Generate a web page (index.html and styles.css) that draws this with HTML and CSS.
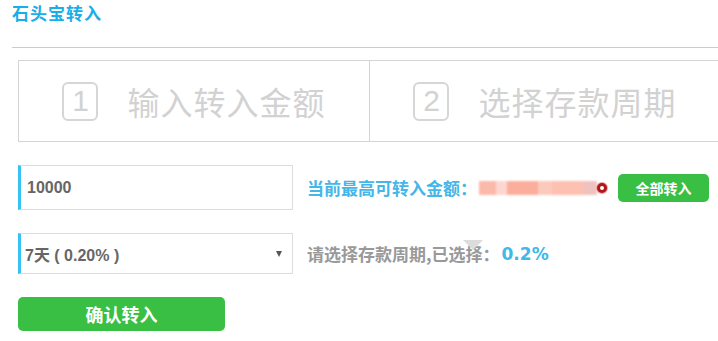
FILE: index.html
```html
<html lang="zh-CN">
  <head>
    <meta charset="UTF-8" />
    <meta name="viewport" content="width=device-width, initial-scale=1.0" />
    <title>石头宝转入</title>
    <link rel="stylesheet" href="styles.css">
  </head>

  <body>
    <div class="header">
      <span class="title">石头宝转入</span>
    </div>

    <div class="steps">
      <div class="step">
        <span class="stepNum">1</span>
        <span class="stepText">输入转入金额</span>
      </div>
      <div class="step">
        <span class="stepNum">2</span>
        <span class="stepText">选择存款周期</span>
      </div>
    </div>

    <div class="formRow amountRow">
      <input class="field" type="text" value="10000" />
      <span class="maxLabel">当前最高可转入金额：</span>
      <span class="maxValue"><span class="blur"></span><span class="dot"></span></span>
      <input class="allBtn" type="button" value="全部转入" />
    </div>

    <div class="formRow periodRow">
      <div class="field select">
        <span>7天 ( 0.20% )</span>
        <span class="arrow"></span>
      </div>
      <span class="periodLabel">请选择存款周期,已选择：<span class="tipArrow"></span></span>
      <span class="rate">0.2%</span>
    </div>

    <div class="formRow">
      <input class="confirmBtn" type="button" value="确认转入" />
    </div>
  </body>
</html>
```

FILE: styles.css
```css
body {
  margin: 0;
  font-family: "DejaVu Sans", "Noto Sans CJK SC", sans-serif;
  overflow: hidden;
}

.header {
  margin-left: 12px;
  height: 47px;
  border-bottom: 1px solid #cccccc;
}

.title {
  display: inline-block;
  margin-top: 0;
  font-family: "Noto Sans CJK SC", sans-serif;
  font-size: 17px;
  letter-spacing: 1px;
  font-weight: bold;
  color: #19aee9;
}

.steps {
  display: flex;
  margin: 12px 0 0 18px;
  width: 710px;
  height: 80px;
  border: 1px solid #d4d4d4;
  border-right: none;
}

.step {
  flex: 0 0 350px;
  display: flex;
  align-items: center;
  justify-content: center;
  gap: 29px;
  color: #d2d2d2;
}

.step + .step {
  border-left: 1px solid #d4d4d4;
}

.stepNum {
  width: 32px;
  height: 35px;
  border: 2px solid #d6d6d6;
  border-radius: 6px;
  display: flex;
  align-items: center;
  justify-content: center;
  font-family: "Liberation Sans", sans-serif;
  font-size: 30px;
  color: #d2d2d2;
}

.stepText {
  font-family: "Noto Sans CJK SC", sans-serif;
  font-size: 32px;
  letter-spacing: 1px;
}

.formRow {
  display: flex;
  align-items: center;
  margin-left: 18px;
}

.amountRow {
  margin-top: 23px;
}

.periodRow {
  margin-top: 23px;
}

.field {
  box-sizing: border-box;
  width: 275px;
  height: 45px;
  border: 1px solid #dddddd;
  border-left: 3px solid #36c3f3;
  padding: 0 0 0 6px;
  font-family: "Liberation Sans", "Noto Sans CJK SC", sans-serif;
  font-size: 16px;
  font-weight: bold;
  color: #666666;
  outline: none;
}

.maxLabel {
  margin-left: 14px;
  font-family: "Noto Sans CJK SC", sans-serif;
  font-size: 17px;
  font-weight: bold;
  color: #45b6e8;
}

.maxValue {
  position: relative;
  display: inline-block;
  width: 132px;
  height: 18px;
}

.blur {
  position: absolute;
  left: 2px;
  top: 2px;
  width: 118px;
  height: 14px;
  background: linear-gradient(90deg, #fbb9aa 0 14%, #fdd7cf 14% 24%, #fbae9c 24% 50%, #fccabc 50% 62%, #fdc0b1 62% 88%, #efc2c0 88%);
  filter: blur(1px);
}

.dot {
  position: absolute;
  right: 2px;
  top: 4px;
  width: 4px;
  height: 4px;
  border: 3px solid #b3161b;
  border-radius: 50%;
  background: #ffffff;
  box-shadow: 0 0 0 1px #e8a7a7;
}

.allBtn {
  margin-left: 9px;
  width: 91px;
  height: 28px;
  border: none;
  border-radius: 5px;
  background-color: #38bf44;
  color: #ffffff;
  font-family: "Noto Sans CJK SC", sans-serif;
  font-size: 14px;
  font-weight: bold;
  cursor: pointer;
}

.select {
  display: flex;
  align-items: center;
  justify-content: space-between;
  height: 41px;
  padding: 0 10px 0 4px;
}

.arrow {
  width: 0;
  height: 0;
  border-left: 3px solid transparent;
  border-right: 3px solid transparent;
  border-top: 6px solid #555555;
}

.periodLabel {
  position: relative;
  margin-left: 14px;
  font-family: "Noto Sans CJK SC", sans-serif;
  font-size: 17px;
  font-weight: bold;
  color: #999999;
}

.tipArrow {
  position: absolute;
  left: 156px;
  top: -1px;
  width: 0;
  height: 0;
  border-left: 10px solid transparent;
  border-right: 10px solid transparent;
  border-top: 10px solid #dcdcdc;
}

.rate {
  margin-left: 2px;
  font-family: "DejaVu Sans", sans-serif;
  font-size: 17px;
  font-weight: bold;
  color: #3fb8ea;
}

.confirmBtn {
  margin-top: 23px;
  width: 207px;
  height: 34px;
  border: none;
  border-radius: 5px;
  background-color: #38bf44;
  color: #ffffff;
  font-family: "Noto Sans CJK SC", sans-serif;
  font-size: 18px;
  font-weight: bold;
  cursor: pointer;
}
```
